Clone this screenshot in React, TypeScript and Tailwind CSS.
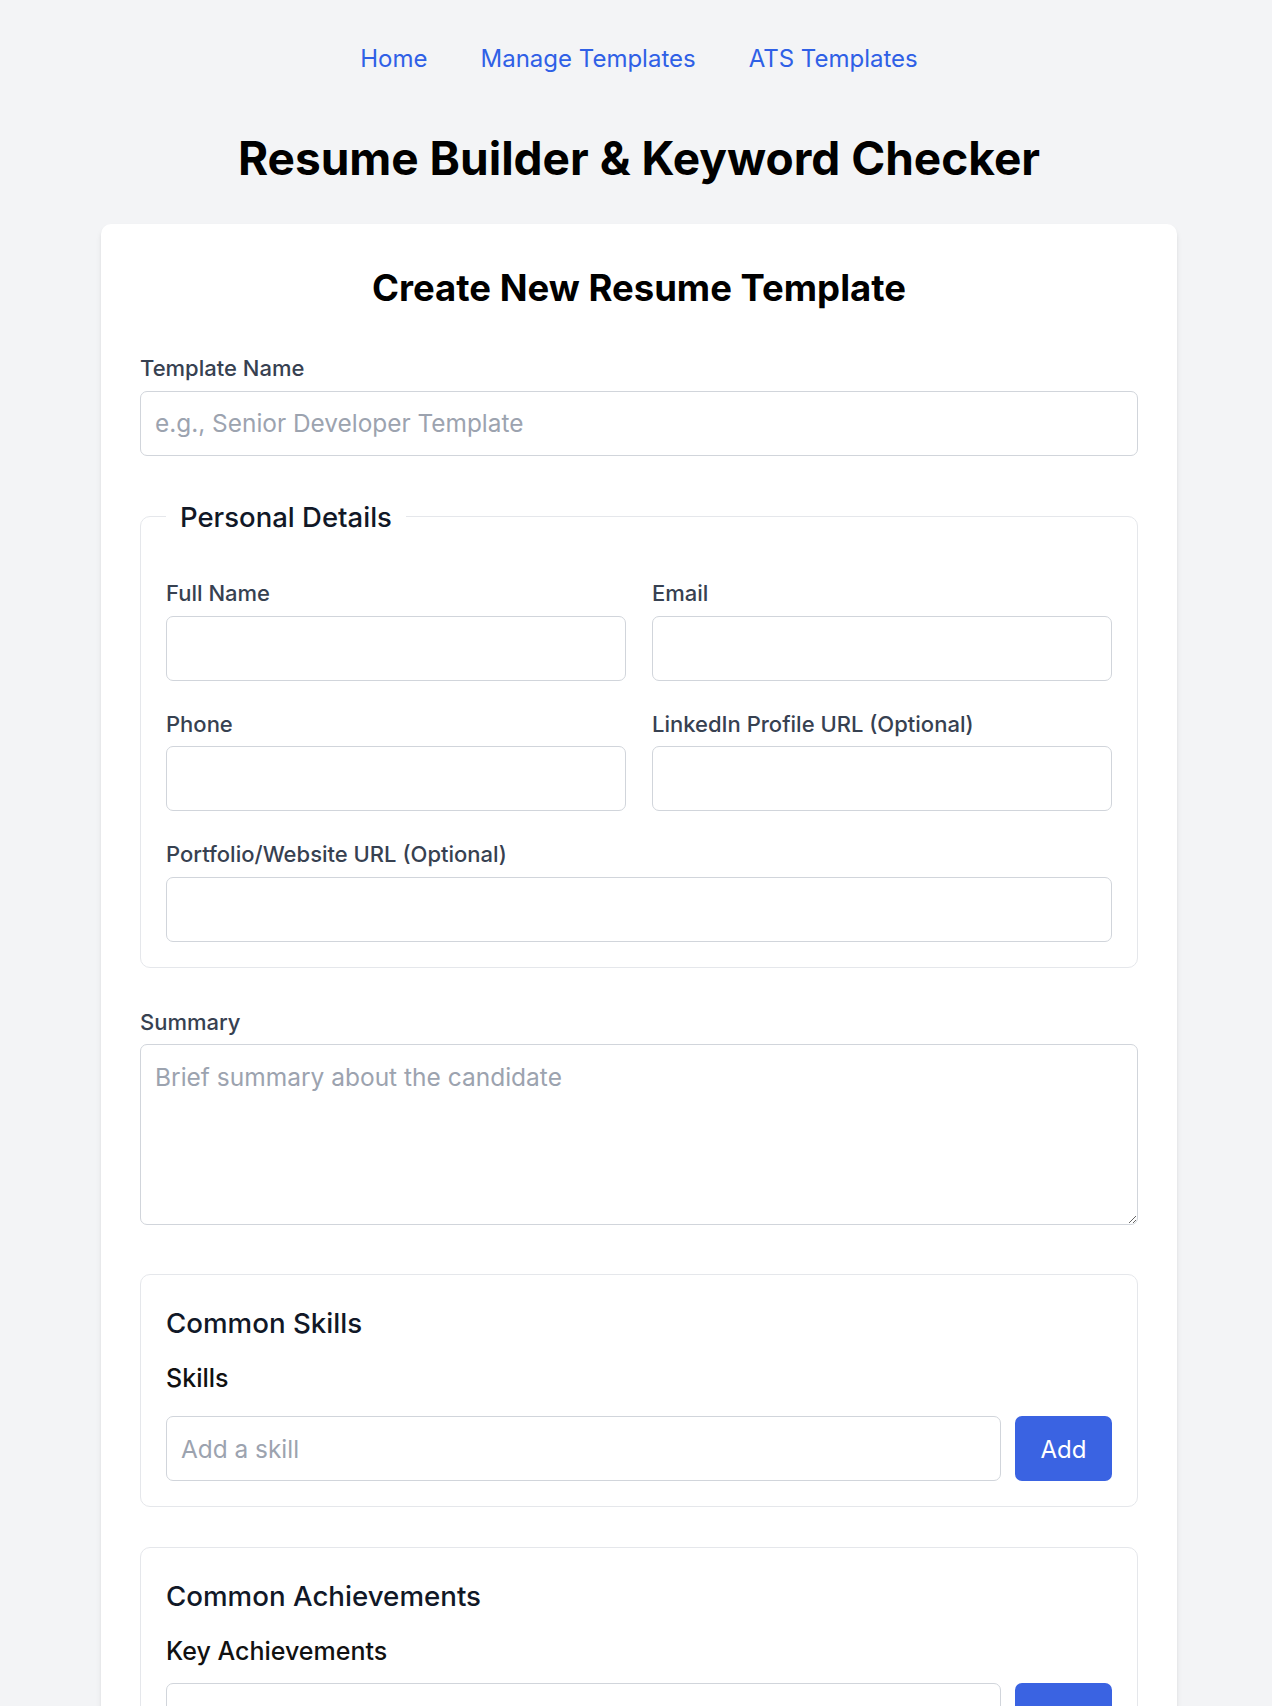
import React from 'react';

const Field = ({ label, placeholder, className = '' }: { label: string; placeholder?: string; className?: string }) => (
  <div className={className}>
    <label className="mb-[5px] block text-[22px] leading-[33.6px] font-medium text-[#374151]">{label}</label>
    <input
      type="text"
      placeholder={placeholder}
      className="block h-[65px] w-full rounded-[7px] border border-[#d1d5db] bg-white px-[14px] text-[24.4px] text-[#111827] outline-none placeholder:text-[#9ca3af]"
    />
  </div>
);

const ListSection = ({ title, label, placeholder, inputGap }: { title: string; label: string; placeholder: string; inputGap: string }) => (
  <div className="rounded-[10px] border border-[#e5e7eb] px-[25px] pt-[29px] pb-[25px]">
    <h3 className="text-[27.7px] leading-[38.4px] font-medium text-[#111827]">{title}</h3>
    <p className="mt-[19px] text-[25px] leading-[33.6px] font-medium text-[#111111]">{label}</p>
    <div className={`flex gap-[14px] ${inputGap}`}>
      <input
        type="text"
        placeholder={placeholder}
        className="block h-[65px] min-w-0 flex-1 rounded-[7px] border border-[#d1d5db] bg-white px-[14px] text-[24.4px] text-[#111827] outline-none placeholder:text-[#9ca3af]"
      />
      <button className="h-[65px] w-[97px] rounded-[7px] bg-[#3a63e2] pt-[3px] text-[24px] text-white">Add</button>
    </div>
  </div>
);

export default function App() {
  return (
    <div className="min-h-screen bg-[#f3f4f6] pt-[43px] pb-[60px] pl-[6px] font-[Inter,'Noto_Sans',sans-serif]">
      {/* Top nav */}
      <nav className="flex justify-center gap-[53px] text-[24px] leading-[32px] text-[#2f60e6]">
        <a href="#">Home</a>
        <a href="#">Manage Templates</a>
        <a href="#">ATS Templates</a>
      </nav>

      <h1 className="mt-[57px] text-center text-[46px] leading-[52px] font-bold text-black">
        Resume Builder &amp; Keyword Checker
      </h1>

      <div className="mx-auto mt-[40px] w-[1076px] rounded-[10px] bg-white px-[39px] pt-[43px] pb-[40px] shadow-md">
        <h2 className="text-center text-[36.5px] leading-[43px] font-bold text-black">Create New Resume Template</h2>

        <Field className="mt-[42px]" label="Template Name" placeholder="e.g., Senior Developer Template" />

        {/* Personal details */}
        <fieldset className="mt-[42px] rounded-[10px] border border-[#e5e7eb] px-[25px] pt-[41px] pb-[25px]">
          <legend className="px-[14px] text-[27.5px] leading-[38.4px] font-medium text-[#111827]">Personal Details</legend>
          <div className="grid grid-cols-2 gap-x-[26px] gap-y-[27px]">
            <Field label="Full Name" />
            <Field label="Email" />
            <Field label="Phone" />
            <Field label="LinkedIn Profile URL (Optional)" />
            <Field className="col-span-2" label="Portfolio/Website URL (Optional)" />
          </div>
        </fieldset>

        <div className="mt-[38px]">
          <label className="mb-[5px] block text-[22px] leading-[33.6px] font-medium text-[#374151]">Summary</label>
          <textarea
            placeholder="Brief summary about the candidate"
            className="block h-[181px] w-full rounded-[7px] border border-[#d1d5db] bg-white px-[14px] pt-[14px] text-[24.5px] leading-[36px] text-[#111827] outline-none placeholder:text-[#9ca3af]"
          />
        </div>

        <div className="mt-[49px]">
          <ListSection title="Common Skills" label="Skills" placeholder="Add a skill" inputGap="mt-[21px]" />
        </div>
        <div className="mt-[40px]">
          <ListSection title="Common Achievements" label="Key Achievements" placeholder="Add an achievement" inputGap="mt-[15px]" />
        </div>
      </div>
    </div>
  );
}
